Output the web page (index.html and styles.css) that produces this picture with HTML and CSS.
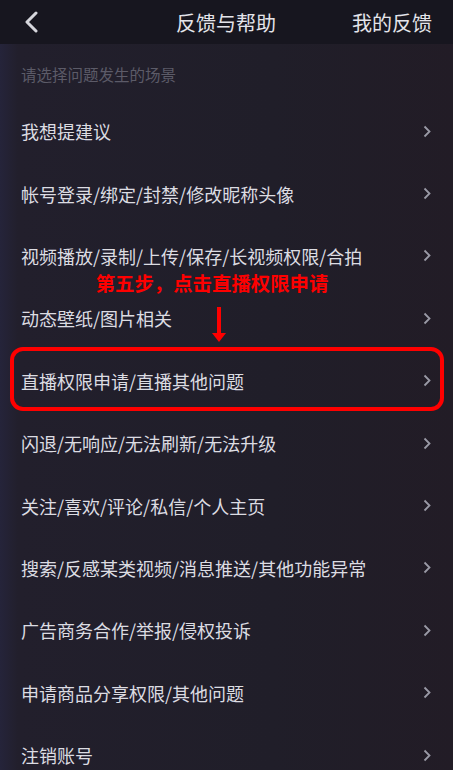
FILE: index.html
```html
<!DOCTYPE html>
<html lang="zh">
<head>
<meta charset="utf-8">
<link rel="stylesheet" href="styles.css">
</head>
<body>
<div class="page">
  <header class="topbar">
    <span class="back"><svg width="16" height="22" viewBox="0 0 16 22"><path d="M12 2 L3 11 L12 20" fill="none" stroke="#d6d6dc" stroke-width="3" stroke-linecap="round" stroke-linejoin="round"/></svg></span>
    <span class="title">反馈与帮助</span>
    <span class="mine">我的反馈</span>
  </header>
  <div class="hint">请选择问题发生的场景</div>
  <ul class="list">
    <li class="row"><span>我想提建议</span><i class="chev"><svg width="8" height="13" viewBox="0 0 8 13"><path d="M1.5 1.5 L6.5 6.5 L1.5 11.5" fill="none" stroke="#9a9aa6" stroke-width="1.8"/></svg></i></li>
    <li class="row"><span>帐号登录/绑定/封禁/修改昵称头像</span><i class="chev"><svg width="8" height="13" viewBox="0 0 8 13"><path d="M1.5 1.5 L6.5 6.5 L1.5 11.5" fill="none" stroke="#9a9aa6" stroke-width="1.8"/></svg></i></li>
    <li class="row"><span>视频播放/录制/上传/保存/长视频权限/合拍</span><i class="chev"><svg width="8" height="13" viewBox="0 0 8 13"><path d="M1.5 1.5 L6.5 6.5 L1.5 11.5" fill="none" stroke="#9a9aa6" stroke-width="1.8"/></svg></i></li>
    <li class="row"><span>动态壁纸/图片相关</span><i class="chev"><svg width="8" height="13" viewBox="0 0 8 13"><path d="M1.5 1.5 L6.5 6.5 L1.5 11.5" fill="none" stroke="#9a9aa6" stroke-width="1.8"/></svg></i></li>
    <li class="row highlight">
      <div class="note">
        <div class="note-text">第五步，点击直播权限申请</div>
        <div class="note-arrow"></div>
      </div>
      <span>直播权限申请/直播其他问题</span><i class="chev"><svg width="8" height="13" viewBox="0 0 8 13"><path d="M1.5 1.5 L6.5 6.5 L1.5 11.5" fill="none" stroke="#9a9aa6" stroke-width="1.8"/></svg></i></li>
    <li class="row"><span>闪退/无响应/无法刷新/无法升级</span><i class="chev"><svg width="8" height="13" viewBox="0 0 8 13"><path d="M1.5 1.5 L6.5 6.5 L1.5 11.5" fill="none" stroke="#9a9aa6" stroke-width="1.8"/></svg></i></li>
    <li class="row"><span>关注/喜欢/评论/私信/个人主页</span><i class="chev"><svg width="8" height="13" viewBox="0 0 8 13"><path d="M1.5 1.5 L6.5 6.5 L1.5 11.5" fill="none" stroke="#9a9aa6" stroke-width="1.8"/></svg></i></li>
    <li class="row"><span>搜索/反感某类视频/消息推送/其他功能异常</span><i class="chev"><svg width="8" height="13" viewBox="0 0 8 13"><path d="M1.5 1.5 L6.5 6.5 L1.5 11.5" fill="none" stroke="#9a9aa6" stroke-width="1.8"/></svg></i></li>
    <li class="row"><span>广告商务合作/举报/侵权投诉</span><i class="chev"><svg width="8" height="13" viewBox="0 0 8 13"><path d="M1.5 1.5 L6.5 6.5 L1.5 11.5" fill="none" stroke="#9a9aa6" stroke-width="1.8"/></svg></i></li>
    <li class="row"><span>申请商品分享权限/其他问题</span><i class="chev"><svg width="8" height="13" viewBox="0 0 8 13"><path d="M1.5 1.5 L6.5 6.5 L1.5 11.5" fill="none" stroke="#9a9aa6" stroke-width="1.8"/></svg></i></li>
    <li class="row"><span>注销账号</span><i class="chev"><svg width="8" height="13" viewBox="0 0 8 13"><path d="M1.5 1.5 L6.5 6.5 L1.5 11.5" fill="none" stroke="#9a9aa6" stroke-width="1.8"/></svg></i></li>
  </ul>
</div>
</body>
</html>
```
FILE: styles.css
```css
html, body {
  margin: 0;
  padding: 0;
  background: #211f2b;
  overflow: hidden;
}
.page {
  width: 453px;
  height: 770px;
  overflow: hidden;
  font-family: "Noto Sans CJK SC", "Noto Sans", sans-serif;
  color: #dcdce2;
  background: linear-gradient(90deg, #25243a 0, #221f2c 4%, #201e29 60%, #221c26 100%);
}
.topbar {
  height: 44px;
  background: #17161f;
  display: flex;
  align-items: center;
  padding: 0 21px 0 24px;
  box-sizing: border-box;
}
.back {
  display: flex;
  width: 40px;
}
.title {
  flex: 1;
  text-align: center;
  font-size: 20px;
  margin-left: 36px;
  color: #e4e4ea;
}
.mine {
  font-size: 20px;
  color: #e4e4ea;
}
.hint {
  padding: 20px 21px 16px;
  line-height: 20px;
  font-size: 15.5px;
  color: #5c5b68;
}
.list {
  list-style: none;
  margin: 0;
  padding: 0;
}
.row {
  height: 62.4px;
  display: flex;
  align-items: center;
  justify-content: space-between;
  padding: 0 22px 0 21px;
  box-sizing: border-box;
  font-size: 18px;
  position: relative;
}
.chev {
  display: flex;
}
.highlight::after {
  content: "";
  position: absolute;
  left: 10px;
  right: 9px;
  top: -3px;
  bottom: 1px;
  border: 4px solid #fe0000;
  border-radius: 13px;
}
.note {
  position: absolute;
  left: 0;
  right: 0;
  bottom: calc(100% + 7px);
  display: flex;
  flex-direction: column;
  align-items: center;
}
.note-text {
  color: #fe0000;
  font-weight: 700;
  font-size: 19.4px;
  line-height: 22px;
  margin-left: -29px;
  margin-bottom: 13px;
}
.note-arrow {
  width: 4px;
  height: 28px;
  background: #fe0000;
  position: relative;
  margin-left: -16px;
  margin-bottom: 8px;
}
.note-arrow::after {
  content: "";
  position: absolute;
  left: -5px;
  top: 26px;
  border-left: 7px solid transparent;
  border-right: 7px solid transparent;
  border-top: 9px solid #fe0000;
}
```
